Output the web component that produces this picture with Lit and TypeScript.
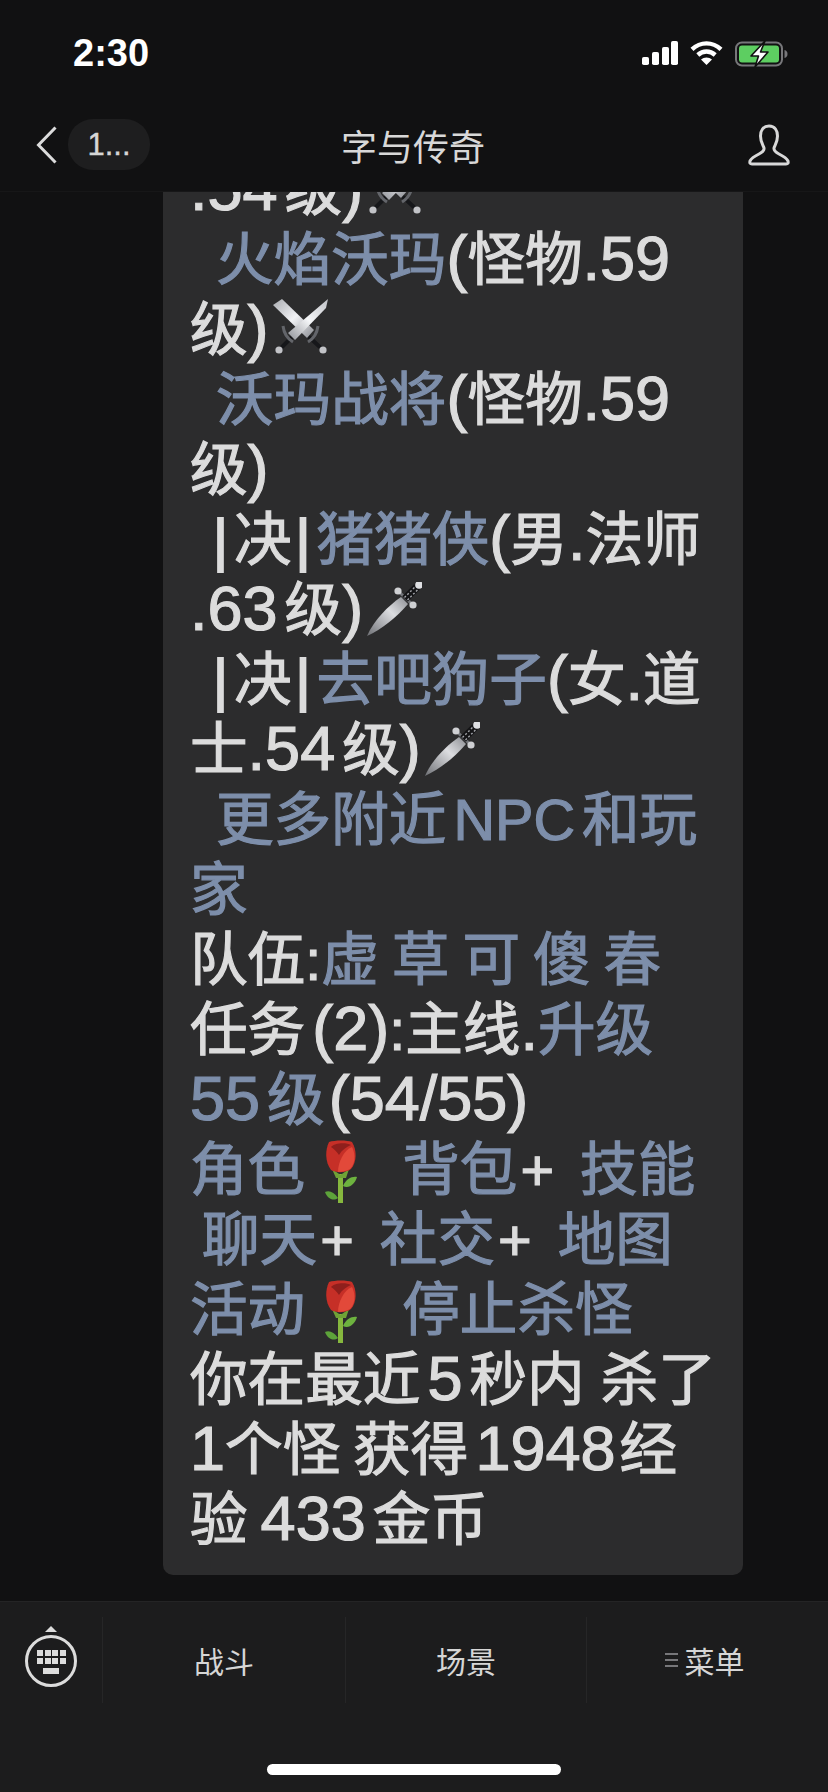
import { LitElement, html, css } from "lit";
import { customElement } from "lit/decorators.js";

const swords = html`<svg class="emoji sw" viewBox="0 0 56 56">
  <defs>
    <linearGradient id="bl" x1="0" y1="0" x2="1" y2="1"><stop offset="0" stop-color="#a9abb0"/><stop offset=".5" stop-color="#f1f2f5"/><stop offset="1" stop-color="#8a8c92"/></linearGradient>
    <linearGradient id="br" x1="1" y1="0" x2="0" y2="1"><stop offset="0" stop-color="#bfc1c6"/><stop offset=".5" stop-color="#f6f7f9"/><stop offset="1" stop-color="#8f9197"/></linearGradient>
  </defs>
  <path d="M20 37 L7 50 M35 37 L49 50" stroke="#16171a" stroke-width="4"/>
  <path d="M10 27 C11 35 15 40 20 43 M45 27 C44 35 40 40 35 43" stroke="#63656a" stroke-width="3" fill="none"/>
  <circle cx="6" cy="51" r="3.6" fill="#c2c3c7"/><circle cx="50" cy="51" r="3.6" fill="#c2c3c7"/>
  <path d="M0 6 L9 0 L41 31 L34 39 Z" fill="url(#bl)"/>
  <path d="M55 0 L53 9 L22 41 L15 34 Z" fill="url(#br)"/>
</svg>`;

const dagger = html`<svg class="emoji dg" viewBox="0 0 56 56">
  <defs>
    <linearGradient id="dg" x1="0" y1="1" x2="1" y2="0"><stop offset="0" stop-color="#6d6f74"/><stop offset=".6" stop-color="#dcdde0"/><stop offset="1" stop-color="#8b8d92"/></linearGradient>
  </defs>
  <path d="M1 54 C8 38 22 24 35 15 L42 22 C31 35 16 47 1 54 Z" fill="url(#dg)"/>
  <path d="M32 9 L47 23" stroke="#74767b" stroke-width="3"/>
  <path d="M39 17 L51 5" stroke="#141416" stroke-width="8"/>
  <path d="M38.5 15.5 L49 5 M41.5 18 L52 7.5" stroke="#a2a4a9" stroke-width="1.4" stroke-dasharray="2 2"/>
  <circle cx="32" cy="9" r="3.6" fill="#cfd0d3"/>
  <circle cx="47" cy="23" r="3.6" fill="#cfd0d3"/>
  <circle cx="53" cy="3" r="3.8" fill="#dfe0e3"/>
</svg>`;

const rose = html`<svg class="emoji rose" viewBox="0 0 33 64">
  <path d="M14 34 H19 V63 H14 Z" fill="#86b83e"/>
  <path d="M19 46 C22 39 28 36 33 37 C31 44 25 49 19 46 Z" fill="#6db33f"/>
  <path d="M14 58 C10 52 5 50 1 52 C3 58 9 62 14 58 Z" fill="#5da33a"/>
  <path d="M8 29 L16.5 35 L25 29 L22 38 H12 Z" fill="#6fa236"/>
  <path d="M5 2 C11 0 23 0 28 2 C33 10 33 22 27 29 C22 33 12 33 7 30 C1 22 1 10 5 2 Z" fill="#c62f27"/>
  <path d="M7 7 C10 3 22 2 27 5 C22 7 18 10 15 15 C12 11 10 9 7 7 Z" fill="#8f1f1c"/>
  <path d="M14 32 C14 22 20 10 28 7 C32 15 31 24 26 29 C23 31 18 32 14 32 Z" fill="#e2493a"/>
</svg>`;

const space = html`<i class="s"></i>`;
const indent = html`<i class="in"></i>`;
const bar = html`<span class="bar">|</span>`;
const plus = html`<span class="p">+</span>`;
const t = (s: string) => html`<span class="t">${s}</span>`;

@customElement("app-root")
export class AppRoot extends LitElement {
  static styles = css`
    :host {
      display: flex;
      flex-direction: column;
      width: 828px;
      height: 1792px;
      overflow: hidden;
      background: #111112;
      font-family: "Liberation Sans", "Noto Sans CJK SC", sans-serif;
      color: #dcdcdc;
    }
    .top {
      flex: none;
      height: 192px;
      background: #111112;
      border-bottom: 1px solid #171718;
      box-sizing: border-box;
      position: relative;
      z-index: 1;
      display: flex;
      flex-direction: column;
    }
    .status {
      box-sizing: border-box;
      height: 98px;
      display: flex;
      align-items: flex-start;
      justify-content: space-between;
      padding: 34px 40px 0 73px;
    }
    .time {
      font: 700 38px/38px "Liberation Sans", sans-serif;
      color: #fff;
    }
    .status-icons { display: flex; align-items: flex-start; gap: 12px; padding-top: 7px; }
    .status-icons svg { display: block; }
    .nav {
      flex: 1;
      display: grid;
      grid-template-columns: 1fr auto 1fr;
      align-items: center;
      padding: 0 38px 0 36px;
    }
    .nav-left { display: flex; align-items: center; gap: 11px; }
    .pill {
      width: 82px;
      height: 51px;
      border-radius: 25px;
      background: #1e1e1f;
      display: flex;
      align-items: center;
      justify-content: center;
      font: 400 31px/1 "Liberation Sans", sans-serif;
      color: #d6d6d6;
      -webkit-text-stroke: 0.4px currentColor;
    }
    .title { font: 400 36px/44px "Noto Sans CJK SC", sans-serif; color: #d8d8d8; }
    .nav-right { display: flex; justify-content: flex-end; }
    .scroll {
      flex: 1;
      min-height: 0;
      overflow: hidden;
      display: flex;
      flex-direction: column;
      justify-content: flex-end;
      align-items: flex-start;
      padding: 0 85px 26px 163px;
    }
    .bubble {
      flex: none;
      box-sizing: border-box;
      width: 580px;
      background: #2c2c2d;
      border-radius: 0 0 10px 10px;
      padding: 0 0 20px 27px;
      font-size: 57.6px;
      line-height: 70px;
    }
    .l { height: 70px; white-space: pre; -webkit-text-stroke: 1.2px currentColor; }
    .b { color: #7d8eaa; }
    .t { font-size: 63px; line-height: 0; }
    .s { display: inline-block; width: 7px; }
    .x { display: inline-block; width: 4px; }
    .in { display: inline-block; width: 26px; }
    .in.bars { width: 19px; }
    .h { display: inline-block; width: 12px; }
    .tight { word-spacing: -3px; }
    .bar { margin: 0 6px 0 4px; -webkit-text-stroke: 2px currentColor; }
    .p { margin-left: 3px; }
    .emoji {
      display: inline-block;
      width: 56px;
      height: 56px;
      margin: 0 6px;
      vertical-align: -8px;
    }
    .sw { margin: 0 6px 0 4px; vertical-align: -5px; }
    .dg { margin: 0 6px 0 3px; }
    .rose { width: 33px; height: 64px; margin: 0 19px 0 19px; vertical-align: -14px; }
    .foot {
      flex: none;
      height: 191px;
      background: #1c1c1d;
      border-top: 1px solid #242425;
      box-sizing: border-box;
      display: flex;
      flex-direction: column;
    }
    .btns { display: grid; grid-template-columns: 102px 243px 241px 1fr; padding-top: 15px; height: 86px; box-sizing: content-box; }
    .btn {
      border-left: 1px solid #262627;
      display: flex;
      align-items: center;
      justify-content: center;
      gap: 7px;
      font: 400 30px/34px "Noto Sans CJK SC", sans-serif;
      color: #d6d6d6;
      padding-bottom: 1px;
    }
    .btn.menu { padding-right: 6px; }
    .kbd { border-left: none; padding: 0 0 6px; }
    .home {
      width: 294px;
      height: 11px;
      border-radius: 6px;
      background: #fff;
      margin: 61px auto 0 267px;
    }
  `;

  render() {
    return html`
      <div class="top">
        <div class="status">
          <span class="time">2:30</span>
          <div class="status-icons">
            <svg width="36" height="24" viewBox="0 0 36 24" fill="#fff">
              <rect x="0" y="16" width="7" height="8" rx="1.8"/>
              <rect x="10" y="11" width="7" height="13" rx="1.8"/>
              <rect x="20" y="6" width="7" height="18" rx="1.8"/>
              <rect x="29" y="0" width="7" height="24" rx="1.8"/>
            </svg>
            <svg width="33" height="24" viewBox="0 0 33 24" fill="none" stroke="#fff" stroke-width="4.4">
              <path d="M2 8.4 C10.5 0.4 22.5 0.4 31 8.4"/>
              <path d="M7.8 14 C13 9.3 20 9.3 25.2 14"/>
              <path d="M16.5 24 L11 18.6 C14 15.8 19 15.8 22 18.6 Z" fill="#fff" stroke="none"/>
            </svg>
            <svg width="53" height="26" viewBox="0 0 53 26">
              <rect x="1" y="1.5" width="46" height="23" rx="6" fill="none" stroke="#77777a" stroke-width="2"/>
              <rect x="4" y="4.5" width="40" height="17" rx="3" fill="#5dce61"/>
              <path d="M49.5 9 C51.5 9.6 52.5 11 52.5 13 C52.5 15 51.5 16.4 49.5 17 Z" fill="#77777a"/>
              <path d="M30 0 L16 15 H23.5 L20 26 L33 11 H25.5 Z" fill="#fff" stroke="#111" stroke-width="1.6" stroke-linejoin="round"/>
            </svg>
          </div>
        </div>
        <div class="nav">
          <div class="nav-left">
            <svg width="21" height="38" viewBox="0 0 21 38" fill="none" stroke="#dcdcdc" stroke-width="3">
              <path d="M19.5 1.5 L2.5 19 L19.5 36.5"/>
            </svg>
            <div class="pill">1...</div>
          </div>
          <div class="title">字与传奇</div>
          <div class="nav-right">
            <svg width="42" height="42" viewBox="0 0 42 42" fill="none" stroke="#d8d8d8" stroke-width="3" stroke-linejoin="round">
              <path d="M21 2 C15 2 12.5 7 12.5 12 C12.5 18 15 21 16 24 C16.5 27 14 28.5 11 30 C7 32 3 35 2 37 C1.5 39 2 40 4 40 H38 C40 40 40.5 39 40 37 C39 35 35 32 31 30 C28 28.5 25.5 27 26 24 C27 21 29.5 18 29.5 12 C29.5 7 27 2 21 2 Z"/>
            </svg>
          </div>
        </div>
      </div>

      <div class="scroll">
        <div class="bubble">
          <div class="l">${t(".54")}${space}级${t(")")}${swords}</div>
          <div class="l">${indent}<span class="b">火焰沃玛</span>${t("(")}怪物${t(".59")}</div>
          <div class="l">级${t(")")}${swords}</div>
          <div class="l">${indent}<span class="b">沃玛战将</span>${t("(")}怪物${t(".59")}</div>
          <div class="l">级${t(")")}</div>
          <div class="l"><i class="in bars"></i>${bar}决${bar}<span class="b">猪猪侠</span>${t("(")}男${t(".")}法师</div>
          <div class="l">${t(".63")}${space}级${t(")")}${dagger}</div>
          <div class="l"><i class="in bars"></i>${bar}决${bar}<span class="b">去吧狗子</span>${t("(")}女${t(".")}道</div>
          <div class="l">士${t(".54")}${space}级${t(")")}${dagger}</div>
          <div class="l">${indent}<span class="b">更多附近${space}NPC${space}和玩</span></div>
          <div class="l"><span class="b">家</span></div>
          <div class="l tight">队伍:<span class="b">虚 草 可 傻 春</span></div>
          <div class="l">任务${space}${t("(2)")}:主线${t(".")}<span class="b">升级</span></div>
          <div class="l"><span class="b">${t("55")}${space}级</span><i class="x"></i>${t("(54/55)")}</div>
          <div class="l tight"><span class="b">角色</span>${rose}  <span class="b">背包</span>${plus}  <span class="b">技能</span></div>
          <div class="l tight"><i class="h"></i><span class="b">聊天</span>${plus}  <span class="b">社交</span>${plus}  <span class="b">地图</span></div>
          <div class="l tight"><span class="b">活动</span>${rose}  <span class="b">停止杀怪</span></div>
          <div class="l">你在最近${space}${t("5")}${space}秒内 杀了</div>
          <div class="l tight">${t("1")}个怪 获得${space}${t("1948")}<i class="x"></i>经</div>
          <div class="l tight">验 ${t("433")}${space}金币</div>
        </div>
      </div>

      <div class="foot">
        <div class="btns">
          <div class="btn kbd">
            <svg width="52" height="62" viewBox="0 0 52 62">
              <path d="M26 0 L32 6 H20 Z" fill="#dcdcdc"/>
              <circle cx="26" cy="35" r="24.5" fill="none" stroke="#dcdcdc" stroke-width="3"/>
              <g fill="#dcdcdc">
                <rect x="12" y="24" width="6" height="6"/><rect x="20" y="24" width="6" height="6"/><rect x="27" y="24" width="6" height="6"/><rect x="35" y="24" width="6" height="6"/>
                <rect x="12" y="32" width="6" height="6"/><rect x="20" y="32" width="6" height="6"/><rect x="27" y="32" width="6" height="6"/><rect x="35" y="32" width="6" height="6"/>
                <rect x="18" y="42" width="16" height="6"/>
              </g>
            </svg>
          </div>
          <div class="btn">战斗</div>
          <div class="btn">场景</div>
          <div class="btn menu">
            <svg width="13" height="16" viewBox="0 0 13 16" stroke="#77777a" stroke-width="2"><path d="M0 2 H13 M0 8 H13 M0 14 H13"/></svg>
            <span>菜单</span>
          </div>
        </div>
        <div class="home"></div>
      </div>
    `;
  }
}
